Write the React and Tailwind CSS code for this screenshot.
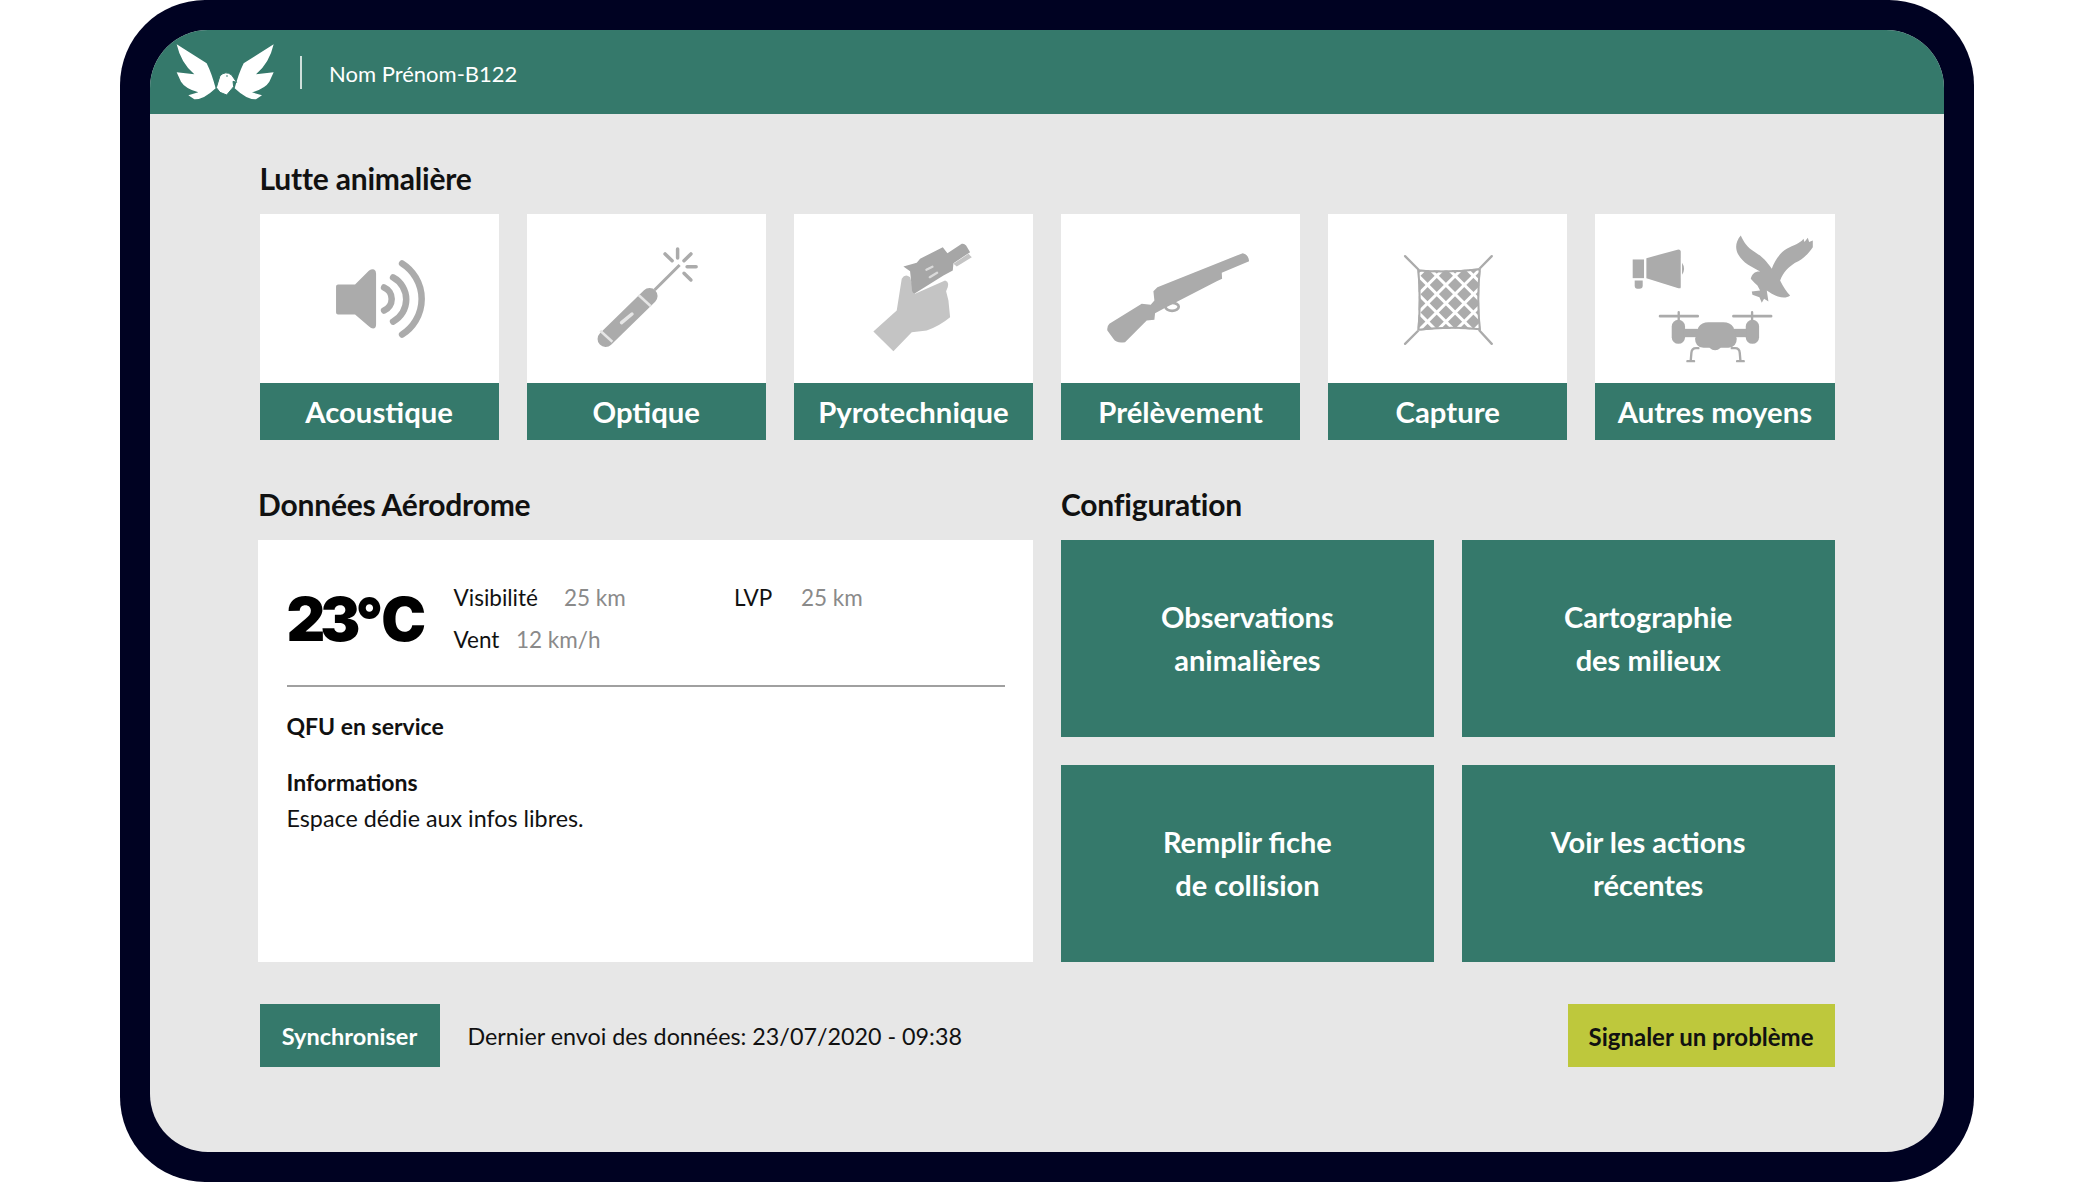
import React from 'react';

const GREY = '#ABABAB';
const GREEN = '#35796B';

const IconFrame = ({ children }) => (
  <svg viewBox="0 0 239 168" className="block w-full h-full">{children}</svg>
);

const SpeakerIcon = () => (
  <IconFrame>
    <path d="M78 70H95L109 56Q112 54 114 55Q116 56 116 59V110Q116 114 113 114Q111 114 109 112L95 100H78Q76 100 76 98V72Q76 70 78 70Z" fill={GREY} />
    <g fill="none" stroke={GREY} strokeWidth="6.5" strokeLinecap="round">
      <path d="M124 73A12.5 12.5 0 0 1 124 96" />
      <path d="M133 63A25 25 0 0 1 133 107" />
      <path d="M142 49A42 42 0 0 1 142 120" />
    </g>
  </IconFrame>
);

const FlareIcon = () => (
  <IconFrame>
    <g transform="translate(-1.5 -0.5)">
      <path d="M129 76L154 51" stroke={GREY} strokeWidth="3" />
      <path d="M80 125L124 82" stroke={GREY} strokeWidth="16" strokeLinecap="round" />
      <g stroke="#E6E6E6" strokeWidth="2.5">
        <path d="M74.7 116.7L86.8 127.7" />
        <path d="M113 81L125 92" />
      </g>
      <path d="M96 108.7L106.4 100" stroke="#E6E6E6" strokeWidth="3.5" strokeLinecap="round" />
      <g stroke={GREY} strokeWidth="3.5" strokeLinecap="round">
        <path d="M152 35V44" />
        <path d="M139.5 40L146.5 46.7" />
        <path d="M165.3 40L158.4 46.7" />
        <path d="M161.5 52.7H170.5" />
        <path d="M158.4 59.3L165.3 66" />
      </g>
    </g>
  </IconFrame>
);

const PyroIcon = () => (
  <IconFrame>
    <g transform="translate(66 16) scale(.3333)">
      <path d="M40 303L110 240L125 145Q135 128 150 140L165 190L255 150Q272 155 258 182L265 210L270 260Q240 285 200 300L155 305L100 362Z" fill="#C4C4C4" />
      <path d="M280 100L325 70L335 80L290 108Z" fill="#C4C4C4" />
      <path d="M130 108L170 97L180 85L248 50L262 68L305 40Q312 38 318 45L330 65L280 98L278 120L250 135L165 188Q155 190 155 170L150 122Z" fill="#A6A6A6" />
      <g stroke="#DADADA" strokeWidth="7" strokeLinecap="round">
        <path d="M199 118L217 109" />
        <path d="M209 140L231 127" />
      </g>
    </g>
  </IconFrame>
);

const RifleIcon = () => (
  <IconFrame>
    <g transform="translate(39 26) scale(.3333)">
      <path d="M28 250L125 190L152 193L163 180L160 152L172 140L428 38Q445 42 447 62L365 97L366 115L350 122L190 205L165 218L163 238L140 240L75 305Q50 310 40 295L22 270Q20 258 28 250Z" fill={GREY} />
      <ellipse cx="216" cy="199" rx="20" ry="12" fill="none" stroke={GREY} strokeWidth="8" />
    </g>
  </IconFrame>
);

const NetIcon = () => (
  <IconFrame>
    <g transform="translate(62 31) scale(.3333)">
      <defs>
        <clipPath id="net-clip">
          <path d="M82 72Q175 80 272 68Q262 160 272 254Q175 244 82 256Q90 165 82 72Z" />
        </clipPath>
      </defs>
      <g stroke={GREY} strokeWidth="7" strokeLinecap="round">
        <path d="M45 32L85 72" />
        <path d="M305 32L268 70" />
        <path d="M45 295L85 255" />
        <path d="M305 295L268 255" />
      </g>
      <path d="M82 72Q175 80 272 68Q262 160 272 254Q175 244 82 256Q90 165 82 72Z" fill={GREY} />
      <g stroke="#FFFFFF" strokeWidth="9" clipPath="url(#net-clip)">
        {[180, 235, 290, 345, 400, 455, 510].map((c) => (
          <path key={c} d={`M${c - 300} 300L${c} 0`} transform="translate(0 -4)" />
        ))}
        {[-175, -120, -65, -10, 45, 100, 155].map((c) => (
          <path key={c} d={`M${c} 0L${c + 300} 300`} transform="translate(0 -4)" />
        ))}
      </g>
      <path d="M85 75Q175 82 269 71Q260 160 269 251Q175 242 85 253Q93 165 85 75Z" fill="none" stroke={GREY} strokeWidth="6" />
    </g>
  </IconFrame>
);

const OtherIcon = () => (
  <IconFrame>
    <g transform="translate(25 11) scale(.3333)" fill={GREY}>
      {/* megaphone */}
      <path d="M38 102H72V158H38Z" />
      <path d="M79 98L175 72Q182 72 182 78V185Q182 190 175 188L79 158Z" />
      <path d="M186 112Q198 130 186 148Z" />
      <path d="M44 165H68V180Q68 190 58 190H52Q44 190 44 180Z" />
      {/* eagle */}
      <path d="M362 30C372 50 380 65 405 80C430 95 445 115 455 130C462 110 475 85 500 70C520 58 540 55 550 40L553 50L563 37L567 50L578 45L578 65C565 85 545 105 525 112C505 125 490 140 480 165C490 185 500 200 510 210C495 222 475 215 455 205L440 195L445 228L432 220L425 232L418 215L397 208L395 198L420 195L412 180L403 172L392 160C395 145 405 137 420 138C395 125 368 112 355 88C345 70 345 50 362 30Z" />
      {/* drone */}
      <g stroke={GREY} strokeLinecap="round" fill="none">
        <path d="M120 272H233M340 272H453" strokeWidth="8" />
        <path d="M176 260V290M396 260V290" strokeWidth="7" />
        <path d="M235 368H228Q215 368 214 382L212 405M202 407H222M335 368H345Q358 368 359 382L361 405M351 407H371" strokeWidth="7" />
      </g>
      <rect x="155" y="283" width="40" height="72" rx="20" />
      <rect x="377" y="283" width="40" height="72" rx="20" />
      <rect x="190" y="310" width="190" height="25" />
      <path d="M235 305Q245 290 265 290H310Q330 290 340 305L350 340Q350 365 325 367H302Q285 382 268 367H250Q225 365 225 340Z" />
    </g>
  </IconFrame>
);

const Logo = () => (
  <svg viewBox="0 0 450 225" className="w-[150px] h-[75px] shrink-0">
    <g fill="#FFFFFF">
      <path d="M35 28L125 85Q140 115 152 160Q115 195 88 193L70 181L100 172Q60 160 48 140L35 112L88 118Q48 85 35 28Z" />
      <path d="M326 28L236 85Q221 115 209 160Q246 195 273 193L291 181L261 172Q301 160 313 140L326 112L273 118Q313 85 326 28Z" />
      <path d="M154 158L165 122Q182 106 200 120L215 142L204 139L206 155L185 180L165 172Z" stroke={GREEN} strokeWidth="3" />
    </g>
    <circle cx="186" cy="123" r="2.5" fill={GREEN} />
  </svg>
);

const tools = [
  { label: 'Acoustique', icon: SpeakerIcon },
  { label: 'Optique', icon: FlareIcon },
  { label: 'Pyrotechnique', icon: PyroIcon },
  { label: 'Prélèvement', icon: RifleIcon },
  { label: 'Capture', icon: NetIcon },
  { label: 'Autres moyens', icon: OtherIcon },
];

const configTiles = [
  ['Observations', 'animalières'],
  ['Cartographie', 'des milieux'],
  ['Remplir fiche', 'de collision'],
  ['Voir les actions', 'récentes'],
];

const SectionTitle = ({ children, className = '' }) => (
  <h2 className={`h-[36px] leading-[35px] text-[30px] font-bold text-[#111] tracking-[-0.2px] ${className}`}>{children}</h2>
);

export default function App() {
  return (
    <div className="w-full h-[1182px] bg-white font-['Lato',sans-serif] overflow-hidden">
      <div className="ml-[120px] w-[1854px] h-[1182px] bg-[#000222] rounded-[85px] pl-[30px] pr-[30px] py-[30px]">
        <div className="h-full bg-[#E7E7E7] rounded-[58px] overflow-hidden flex flex-col">
          {/* Header */}
          <header className="h-[84px] shrink-0 bg-[#35796B] flex items-center pl-[15px]">
            <Logo />
            <div className="ml-[-15px] w-[2px] h-[33px] bg-[#CFE0DB]" />
            <span className="ml-[27px] pt-[3px] text-[22px] text-white">Nom Prénom-B122</span>
          </header>

          <main className="pt-[47px] pl-[108px] w-[1684.5px]">
            <SectionTitle className="ml-[1.5px]">Lutte animalière</SectionTitle>
            <div className="mt-[17px] ml-[1.5px] grid grid-cols-6 gap-[28px]">
              {tools.map(({ label, icon: Icon }) => (
                <div key={label} className="bg-white">
                  <div className="h-[169px]">
                    <Icon />
                  </div>
                  <div className="h-[57px] bg-[#35796B] flex items-center justify-center text-white text-[29.3px] font-bold">
                    {label}
                  </div>
                </div>
              ))}
            </div>

            <div className="mt-[47px] grid grid-cols-[774.5px_1fr] gap-x-[28.5px]">
              <div>
                <SectionTitle>Données Aérodrome</SectionTitle>
                <section className="mt-[17px] h-[422px] bg-white pl-[28.5px] pr-[27.5px] pt-[36.5px]">
                  <div className="flex">
                    <div className="w-[167px] pt-[2px] h-[84px] text-[60px] leading-[80px] font-['Inter',sans-serif] font-black text-black">
                      <span className="tracking-[-5px]">23</span>
                      <span className="tracking-[-2px]">°</span>
                      <span>C</span>
                    </div>
                    <div className="text-[22.5px] leading-[42px] text-[#111]">
                      <div className="flex">
                        <span className="w-[110.5px]">Visibilité</span>
                        <span className="w-[170px] text-[#8A8A8A]">25 km</span>
                        <span className="w-[67px]">LVP</span>
                        <span className="text-[#8A8A8A]">25 km</span>
                      </div>
                      <div className="flex">
                        <span className="w-[62.5px]">Vent</span>
                        <span className="text-[#8A8A8A]">12 km/h</span>
                      </div>
                    </div>
                  </div>
                  <div className="mt-[24.5px] h-[2px] bg-[#A0A0A0]" />
                  <div className="mt-[23.5px] text-[23px] leading-[31px] text-[#111]">
                    <p className="font-bold">QFU en service</p>
                    <p className="mt-[25.5px] font-bold">Informations</p>
                    <p className="mt-[4.5px] text-[23.3px]">Espace dédie aux infos libres.</p>
                  </div>
                </section>
              </div>
              <div>
                <SectionTitle>Configuration</SectionTitle>
                <div className="mt-[17px] h-[422px] grid grid-cols-2 grid-rows-2 gap-[28px]">
                  {configTiles.map(([first, second]) => (
                    <div key={first} className="bg-[#35796B] pb-[1px] flex flex-col items-center justify-center text-white text-[29px] leading-[43px] font-bold">
                      <span>{first}</span>
                      <span>{second}</span>
                    </div>
                  ))}
                </div>
              </div>
            </div>

            <footer className="mt-[42px] ml-[1.5px] flex items-center">
              <button className="w-[180px] h-[63px] pt-[2px] bg-[#35796B] text-white text-[23.5px] font-bold">Synchroniser</button>
              <span className="ml-[28px] pt-[2px] text-[23.3px] text-[#111]">Dernier envoi des données: 23/07/2020 - 09:38</span>
              <button className="ml-auto w-[267px] h-[63px] pt-[2px] bg-[#BEC83C] text-[#111] text-[24px] font-bold">Signaler un problème</button>
            </footer>
          </main>
        </div>
      </div>
    </div>
  );
}
